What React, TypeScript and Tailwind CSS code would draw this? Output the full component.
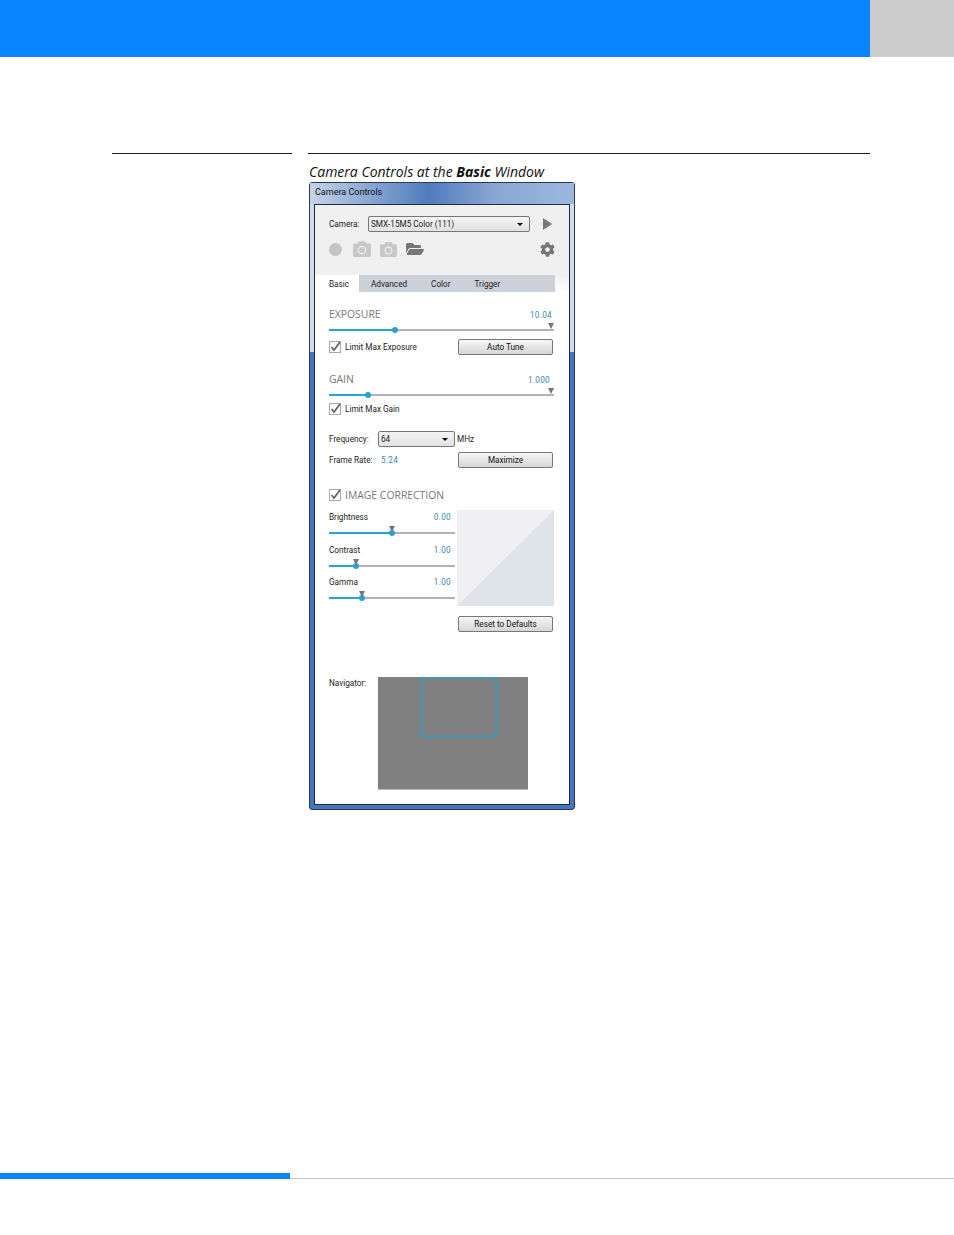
import React from 'react';
import { FaCamera, FaCog, FaFolderOpen } from 'react-icons/fa';

function Btn({ label }: { label: string }) {
  return (
    <div className="flex h-4 w-[95px] items-center justify-center rounded-[2px] border border-[#777] bg-gradient-to-b from-[#f6f6f6] to-[#d6d6d6] text-[#111]">
      {label}
    </div>
  );
}

function Select({ value, width }: { value: string; width: string }) {
  return (
    <div className={`flex h-4 ${width} items-center justify-between rounded-[2px] border border-[#777] bg-gradient-to-b from-[#f4f4f4] to-[#e2e2e2] pl-[2px] pr-[6px] text-[#222]`}>
      <span>{value}</span>
      <span className="h-0 w-0 border-x-[3px] border-t-[3px] border-x-transparent border-t-black" />
    </div>
  );
}

function Slider({ pos, marker }: { pos: number; marker?: number }) {
  return (
    <div className="relative h-[2px] w-full bg-[#b0b4ba]">
      <div className="absolute left-0 top-0 h-[2px] bg-[#29a3d0]" style={{ width: pos }} />
      <div className="absolute top-[-2px] h-[6px] w-[6px] rounded-full bg-[#29a3d0]" style={{ left: pos - 3 }} />
      {marker !== undefined && (
        <div className="absolute top-[-6px] h-0 w-0 border-x-[3px] border-t-[6px] border-x-transparent border-t-[#777]" style={{ left: marker }} />
      )}
    </div>
  );
}

function CheckRow({ label, big }: { label: string; big?: boolean }) {
  return (
    <div className="flex h-3 items-center gap-1">
      <svg width="12" height="12" viewBox="0 0 12 12">
        <rect x="0.5" y="0.5" width="11" height="11" fill="#fff" stroke="#aaa" />
        <path d="M2.5 6 L5 9 L11 1" fill="none" stroke="#666" strokeWidth="1.8" />
      </svg>
      <span className={big ? "font-['Open_Sans',sans-serif] text-[10.4px] text-[#777]" : 'text-[#222]'}>{label}</span>
    </div>
  );
}

const sliders = [
  { label: 'Brightness', value: '0.00', pos: 63, top: 'mt-[1px]', gap: 'mt-[9px]' },
  { label: 'Contrast', value: '1.00', pos: 27, top: 'mt-[10px]', gap: 'mt-[9px]' },
  { label: 'Gamma', value: '1.00', pos: 33, top: 'mt-[9px]', gap: 'mt-[9px]' },
];

export default function App() {
  return (
    <div className="relative flex h-[1235px] w-[954px] flex-col bg-white font-['Roboto',sans-serif]">
      {/* header */}
      <div className="flex h-[57px]">
        <div className="w-[870px] bg-[#0a84ff]" />
        <div className="flex-1 bg-[#cccccc]" />
      </div>

      {/* rules */}
      <div className="mt-[96px] flex pl-[112px]">
        <div className="h-px w-[180px] bg-[#222]" />
        <div className="ml-4 h-px w-[562px] bg-[#222]" />
      </div>

      <div className="ml-[309px] mt-[8px] h-[19px] font-['Open_Sans',sans-serif] text-[14px] italic leading-[19px] text-[#111]">
        Camera Controls at the <b>Basic</b> Window
      </div>

      {/* window */}
      <div className="ml-[309px] mt-[1px] flex h-[628px] w-[266px] flex-col rounded-[3px] border border-[#2a3a55] bg-[linear-gradient(180deg,#cfdcef_27%,#4676c2_27%)] px-1 pb-1 text-[8.2px] leading-[12px]">
        <div className="-mx-1 flex h-[21px] items-center bg-[linear-gradient(90deg,#c5d3e8,#9db5da_15%,#4f7cbc_45%,#8aa6d4_70%,#9db8de)] px-[5px] pb-[3px] text-[9px] text-[#111]">
          Camera Controls
        </div>
        <div className="flex flex-1 flex-col border border-[#1f2a3d] bg-white text-[#222]">
          {/* top */}
          <div className="h-[70px] bg-[#f0f0f0] px-[14px] pt-[11px]">
            <div className="flex items-center">
              <span className="w-[39px]">Camera:</span>
              <Select value="SMX-15M5 Color (111)" width="w-[162px]" />
              <span className="ml-[13px] h-0 w-0 border-y-[6px] border-l-[9px] border-y-transparent border-l-[#777]" />
            </div>
            <div className="mt-[9px] flex h-[16px] items-center">
              <span className="h-[13px] w-[13px] rounded-full bg-[#c4c4c4]" />
              <FaCamera size={18} className="ml-[11px] text-[#c8c8c8]" />
              <FaCamera size={17} className="ml-[9px] text-[#c8c8c8]" />
              <FaFolderOpen size={18} className="ml-[9px] text-[#777]" />
              <FaCog size={15} className="ml-auto text-[#777]" />
            </div>
          </div>
          {/* tabs */}
          <div className="flex h-[17px] items-stretch bg-gradient-to-b from-[#f0f0f0] to-white pr-[14px]">
            <div className="flex w-[44px] items-center bg-white pl-[14px] pt-[1px]">Basic</div>
            <div className="flex flex-1 items-center gap-6 bg-[#ccd0d9] pl-3 pt-[1px]">
              <span>Advanced</span>
              <span>Color</span>
              <span>Trigger</span>
            </div>
          </div>

          <div className="flex flex-1 flex-col px-[14px]">
            <div className="mt-[15px] flex items-baseline justify-between pr-[3px] leading-[15px]">
              <span className="font-['Open_Sans',sans-serif] text-[10.4px] text-[#777]">EXPOSURE</span>
              <span className="tracking-[0.3px] text-[#3a8ab0]">10.04</span>
            </div>
            <div className="mt-[6px] w-[225px]">
              <Slider pos={66} marker={219} />
            </div>
            <div className="mt-[8px] flex w-[224px] items-center justify-between">
              <CheckRow label="Limit Max Exposure" />
              <Btn label="Auto Tune" />
            </div>

            <div className="mt-[17px] flex items-baseline justify-between pr-[5px] leading-[15px]">
              <span className="font-['Open_Sans',sans-serif] text-[10.4px] text-[#777]">GAIN</span>
              <span className="tracking-[0.3px] text-[#3a8ab0]">1.000</span>
            </div>
            <div className="mt-[6px] w-[225px]">
              <Slider pos={39} marker={219} />
            </div>
            <div className="mt-[7px]">
              <CheckRow label="Limit Max Gain" />
            </div>

            <div className="mt-[16px] flex items-center">
              <span className="w-[49px]">Frequency:</span>
              <Select value="64" width="w-[77px]" />
              <span className="ml-[2px]">MHz</span>
            </div>
            <div className="mt-[5px] flex w-[224px] items-center justify-between">
              <div className="flex">
                <span className="w-[52px]">Frame Rate:</span>
                <span className="tracking-[0.3px] text-[#3a8ab0]">5.24</span>
              </div>
              <Btn label="Maximize" />
            </div>

            <div className="mt-[21px]">
              <CheckRow label="IMAGE CORRECTION" big />
            </div>

            <div className="mt-[9px] flex gap-[2px]">
              <div className="w-[126px]">
                {sliders.map((s) => (
                  <div key={s.label} className={s.top}>
                    <div className="flex justify-between pr-[4px] leading-[12px]">
                      <span>{s.label}</span>
                      <span className="tracking-[0.3px] text-[#3a8ab0]">{s.value}</span>
                    </div>
                    <div className={s.gap}>
                      <Slider pos={s.pos} marker={s.pos - 3} />
                    </div>
                  </div>
                ))}
              </div>
              <svg width="97" height="96" viewBox="0 0 97 96">
                <rect width="97" height="96" fill="#f0f0f2" />
                <polygon points="97,0 97,96 0,96" fill="#dfe3ea" />
              </svg>
            </div>

            <div className="mt-[10px] flex w-[224px] justify-end">
              <Btn label="Reset to Defaults" />
            </div>

            <div className="mt-[45px] flex">
              <span className="w-[49px]">Navigator:</span>
              <div className="h-[113px] w-[150px] border-b border-[#bbb] bg-[#808080] pl-[43px]">
                <div className="h-[60px] w-[76px] shadow-[inset_0_0_0_1.5px_#2a9fc8]" />
              </div>
            </div>
          </div>
        </div>
      </div>

      {/* footer */}
      <div className="mb-[56px] mt-auto flex items-end">
        <div className="h-[6px] w-[290px] bg-[#0a84ff]" />
        <div className="h-px flex-1 bg-[#c8c8c8]" />
      </div>
    </div>
  );
}
